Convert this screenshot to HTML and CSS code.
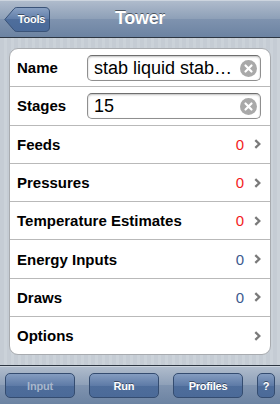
FILE: index.html
```html
<!DOCTYPE html>
<html>
<head>
<meta charset="utf-8">
<link rel="stylesheet" href="styles.css">
</head>
<body>
<div class="app">
  <header class="navbar">
    <button class="back">
      <svg class="back-shape" width="46" height="25" viewBox="0 0 46 25">
        <defs>
          <linearGradient id="bg" x1="0" y1="0" x2="0" y2="1">
            <stop offset="0" stop-color="#8aa2c4"/>
            <stop offset="0.5" stop-color="#5f7ca8"/>
            <stop offset="0.5" stop-color="#4f6e9c"/>
            <stop offset="1" stop-color="#4a6a99"/>
          </linearGradient>
        </defs>
        <path d="M0.8,12.5 L10,1.8 Q11,0.5 12.8,0.5 L41,0.5 Q45.5,0.5 45.5,5 L45.5,20 Q45.5,24.5 41,24.5 L12.8,24.5 Q11,24.5 10,23.2 Z" fill="url(#bg)" stroke="#3a5378" stroke-width="1"/>
      </svg>
      <span class="back-label">Tools</span>
    </button>
    <h1 class="title">Tower</h1>
    <span></span>
  </header>

  <main class="content">
    <section class="card">
      <div class="row">
        <span class="label">Name</span>
        <div class="field">
          <span class="field-text">stab liquid stab…</span>
          <span class="clear"><svg width="17" height="17" viewBox="0 0 17 17"><circle cx="8.5" cy="8.5" r="8.5" fill="#a9a9a9"/><path d="M5.5,5.5 L11.5,11.5 M11.5,5.5 L5.5,11.5" stroke="#fff" stroke-width="2.2" stroke-linecap="round"/></svg></span>
        </div>
      </div>
      <div class="row">
        <span class="label">Stages</span>
        <div class="field">
          <span class="field-text">15</span>
          <span class="clear"><svg width="17" height="17" viewBox="0 0 17 17"><circle cx="8.5" cy="8.5" r="8.5" fill="#a9a9a9"/><path d="M5.5,5.5 L11.5,11.5 M11.5,5.5 L5.5,11.5" stroke="#fff" stroke-width="2.2" stroke-linecap="round"/></svg></span>
        </div>
      </div>
      <div class="row">
        <span class="label">Feeds</span>
        <span class="value red">0</span>
        <svg class="chev" width="7" height="10" viewBox="0 0 7 10"><path d="M1.3,1.2 L5.3,5 L1.3,8.8" fill="none" stroke="#7a7a7a" stroke-width="2.3"/></svg>
      </div>
      <div class="row">
        <span class="label">Pressures</span>
        <span class="value red">0</span>
        <svg class="chev" width="7" height="10" viewBox="0 0 7 10"><path d="M1.3,1.2 L5.3,5 L1.3,8.8" fill="none" stroke="#7a7a7a" stroke-width="2.3"/></svg>
      </div>
      <div class="row">
        <span class="label">Temperature Estimates</span>
        <span class="value red">0</span>
        <svg class="chev" width="7" height="10" viewBox="0 0 7 10"><path d="M1.3,1.2 L5.3,5 L1.3,8.8" fill="none" stroke="#7a7a7a" stroke-width="2.3"/></svg>
      </div>
      <div class="row">
        <span class="label">Energy Inputs</span>
        <span class="value blue">0</span>
        <svg class="chev" width="7" height="10" viewBox="0 0 7 10"><path d="M1.3,1.2 L5.3,5 L1.3,8.8" fill="none" stroke="#7a7a7a" stroke-width="2.3"/></svg>
      </div>
      <div class="row">
        <span class="label">Draws</span>
        <span class="value blue">0</span>
        <svg class="chev" width="7" height="10" viewBox="0 0 7 10"><path d="M1.3,1.2 L5.3,5 L1.3,8.8" fill="none" stroke="#7a7a7a" stroke-width="2.3"/></svg>
      </div>
      <div class="row">
        <span class="label">Options</span>
        <span class="value"></span>
        <svg class="chev" width="7" height="10" viewBox="0 0 7 10"><path d="M1.3,1.2 L5.3,5 L1.3,8.8" fill="none" stroke="#7a7a7a" stroke-width="2.3"/></svg>
      </div>
    </section>
  </main>

  <footer class="toolbar">
    <button class="tb-btn disabled">Input</button>
    <button class="tb-btn">Run</button>
    <button class="tb-btn">Profiles</button>
    <button class="tb-btn small">?</button>
  </footer>
</div>
</body>
</html>
```

FILE: styles.css
```css
* { box-sizing: border-box; }
html, body {
  margin: 0;
  padding: 0;
}
body {
  width: 280px;
  height: 404px;
  overflow: hidden;
  font-family: "Liberation Sans", Arial, sans-serif;
}
.app {
  display: flex;
  flex-direction: column;
  height: 404px;
  background-color: #c5ccd4;
  background-image: repeating-linear-gradient(90deg, #c5ccd4 0 4px, #cbd2d9 4px 7px);
}
.navbar {
  height: 38px;
  flex: none;
  display: grid;
  grid-template-columns: 1fr auto 1fr;
  align-items: center;
  padding: 0 4px;
  background: linear-gradient(#b1bdcd 0%, #8ea0b8 50%, #7f93af 51%, #6c83a2 100%);
  border-bottom: 1px solid #2d3642;
  box-shadow: inset 0 1px 0 #cdd5df;
}
.back {
  position: relative;
  justify-self: start;
  width: 46px;
  height: 25px;
  padding: 0 0 0 9px;
  margin: 1px 0 0 0;
  border: 0;
  background: none;
  display: flex;
  align-items: center;
  justify-content: center;
}
.back-shape {
  position: absolute;
  left: 0;
  top: 0;
}
.back-label {
  position: relative;
  color: #fff;
  font: bold 11px "Liberation Sans", Arial, sans-serif;
  letter-spacing: -0.2px;
  text-shadow: 0 -1px 0 rgba(0,0,0,0.45);
}
.title {
  margin: 0;
  color: #fff;
  font: bold 18px "Liberation Sans", Arial, sans-serif;
  letter-spacing: -0.3px;
  text-shadow: 0 -1px 0 rgba(0,0,0,0.5);
}
.content {
  flex: 1;
  padding: 10px 9px 10px 9px;
}
.card {
  background: #fff;
  border: 1px solid #a8abaf;
  border-radius: 9px;
  overflow: hidden;
}
.row {
  height: 38.3px;
  display: flex;
  align-items: center;
  padding: 0 9px 0 7px;
  border-top: 1px solid #b9b9b9;
}
.row:first-child {
  border-top: 0;
  height: 37.3px;
}
.label {
  font-weight: bold;
  font-size: 15px;
  color: #000;
}
.row .label + .field {
  margin-left: auto;
}
.field {
  width: 174px;
  height: 26px;
  border: 1px solid #8f8f8f;
  border-top-color: #6e6e6e;
  border-radius: 5px;
  box-shadow: inset 0 1px 2px rgba(0,0,0,0.25);
  display: flex;
  align-items: center;
  padding: 0 3px 0 6px;
  margin-top: 1px;
}
.field-text {
  flex: 1;
  font-size: 18px;
  color: #000;
  white-space: nowrap;
  overflow: hidden;
}
.clear {
  display: flex;
  margin-left: 4px;
}
.value {
  margin-left: auto;
  font-size: 15px;
  margin-right: 10px;
}
.red { color: #f31c1c; }
.blue { color: #3d5a8e; }
.chev { flex: none; }
.toolbar {
  height: 39px;
  flex: none;
  display: flex;
  justify-content: space-between;
  align-items: center;
  padding: 0 5px;
  background: linear-gradient(#b1bdcd 0%, #8ea0b8 50%, #7f93af 51%, #6c83a2 100%);
  border-top: 1px solid #2d3642;
  box-shadow: inset 0 1px 0 #cdd5df;
}
.tb-btn {
  width: 70px;
  height: 25px;
  margin-top: 1px;
  border: 1px solid #344c70;
  border-radius: 5px;
  background: linear-gradient(#849cc0 0%, #5e7ba7 50%, #4e6d9b 51%, #4b6a98 100%);
  color: #fff;
  font: bold 11px "Liberation Sans", Arial, sans-serif;
  letter-spacing: -0.2px;
  text-shadow: 0 -1px 0 rgba(0,0,0,0.45);
  padding: 0;
}
.tb-btn.disabled {
  color: #a7b6cb;
  text-shadow: none;
}
.tb-btn.small {
  width: 18px;
}
```
